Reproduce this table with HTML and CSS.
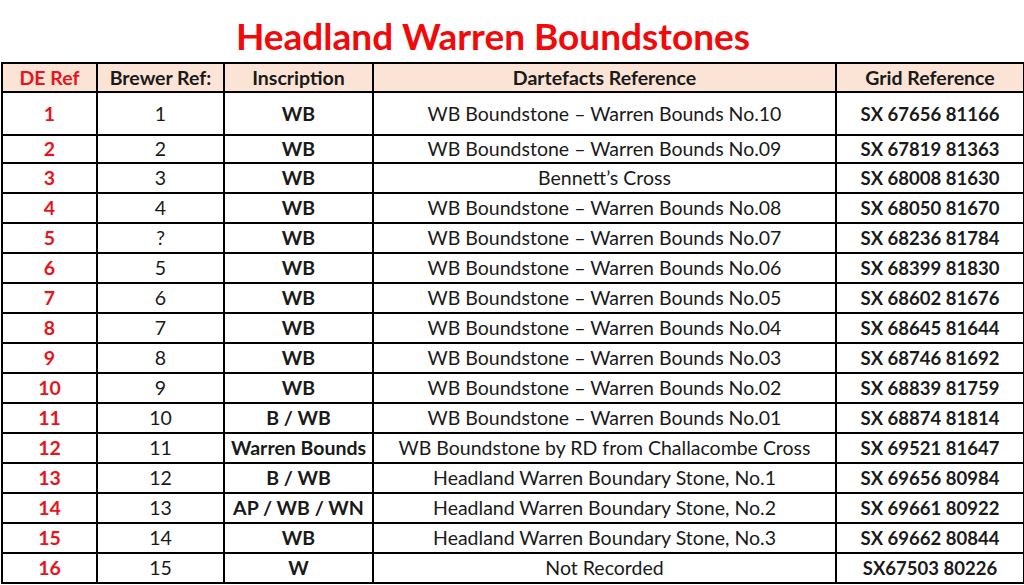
FILE: index.html
```html
<!DOCTYPE html>
<html>
<head>
<meta charset="utf-8">
<link rel="stylesheet" href="styles.css">
</head>
<body>
<h1 class="title">Headland Warren Boundstones</h1>
<table class="grid">
<colgroup>
<col class="c1"><col class="c2"><col class="c3"><col class="c4"><col class="c5">
</colgroup>
<thead>
<tr class="head">
<th class="de">DE Ref</th><th>Brewer Ref:</th><th>Inscription</th><th>Dartefacts Reference</th><th class="g">Grid Reference</th>
</tr>
</thead>
<tbody>
<tr class="r-tall"><td class="de">1</td><td>1</td><td class="b">WB</td><td>WB Boundstone – Warren Bounds No.10</td><td class="g">SX 67656 81166</td></tr>
<tr class="r-short"><td class="de">2</td><td>2</td><td class="b">WB</td><td>WB Boundstone – Warren Bounds No.09</td><td class="g">SX 67819 81363</td></tr>
<tr><td class="de">3</td><td>3</td><td class="b">WB</td><td>Bennett’s Cross</td><td class="g">SX 68008 81630</td></tr>
<tr><td class="de">4</td><td>4</td><td class="b">WB</td><td>WB Boundstone – Warren Bounds No.08</td><td class="g">SX 68050 81670</td></tr>
<tr><td class="de">5</td><td>?</td><td class="b">WB</td><td>WB Boundstone – Warren Bounds No.07</td><td class="g">SX 68236 81784</td></tr>
<tr><td class="de">6</td><td>5</td><td class="b">WB</td><td>WB Boundstone – Warren Bounds No.06</td><td class="g">SX 68399 81830</td></tr>
<tr><td class="de">7</td><td>6</td><td class="b">WB</td><td>WB Boundstone – Warren Bounds No.05</td><td class="g">SX 68602 81676</td></tr>
<tr><td class="de">8</td><td>7</td><td class="b">WB</td><td>WB Boundstone – Warren Bounds No.04</td><td class="g">SX 68645 81644</td></tr>
<tr><td class="de">9</td><td>8</td><td class="b">WB</td><td>WB Boundstone – Warren Bounds No.03</td><td class="g">SX 68746 81692</td></tr>
<tr><td class="de">10</td><td>9</td><td class="b">WB</td><td>WB Boundstone – Warren Bounds No.02</td><td class="g">SX 68839 81759</td></tr>
<tr><td class="de">11</td><td>10</td><td class="b">B / WB</td><td>WB Boundstone – Warren Bounds No.01</td><td class="g">SX 68874 81814</td></tr>
<tr><td class="de">12</td><td>11</td><td class="b">Warren Bounds</td><td>WB Boundstone by RD from Challacombe Cross</td><td class="g">SX 69521 81647</td></tr>
<tr><td class="de">13</td><td>12</td><td class="b">B / WB</td><td>Headland Warren Boundary Stone, No.1</td><td class="g">SX 69656 80984</td></tr>
<tr><td class="de">14</td><td>13</td><td class="b">AP / WB / WN</td><td>Headland Warren Boundary Stone, No.2</td><td class="g">SX 69661 80922</td></tr>
<tr><td class="de">15</td><td>14</td><td class="b">WB</td><td>Headland Warren Boundary Stone, No.3</td><td class="g">SX 69662 80844</td></tr>
<tr><td class="de">16</td><td>15</td><td class="b">W</td><td>Not Recorded</td><td class="g">SX67503 80226</td></tr>
</tbody>
</table>
</body>
</html>
```
FILE: styles.css
```css
html, body {
  margin: 0;
  padding: 0;
  background: #ffffff;
}
body {
  font-family: Lato, "Liberation Sans", sans-serif;
  color: #1a1a1a;
  width: 1024px;
}
.title {
  margin: 0;
  height: 62px;
  line-height: 72px;
  text-align: center;
  font-size: 37px;
  font-weight: 700;
  color: #f00a0a;
  padding-right: 38px;
}
.grid {
  border-collapse: collapse;
  table-layout: fixed;
  width: 1022px;
  margin-left: 1px;
}
.c1 { width: 95px; }
.c2 { width: 127px; }
.c3 { width: 149px; }
.c4 { width: 463px; }
.c5 { width: 188px; }
.grid th, .grid td {
  border: 2px solid #000000;
  padding: 0;
  text-align: center;
  vertical-align: middle;
  font-size: 19.5px;
  line-height: 22px;
  white-space: nowrap;
  overflow: hidden;
}
.grid th {
  background: #fbe3d5;
  font-weight: 700;
  height: 27px;
}
.grid td {
  height: 28px;
  font-weight: 400;
}
.grid tr.r-tall td { height: 41px; }
.grid tr.r-short td { height: 26px; }
.grid .de {
  color: #e8141c;
  font-weight: 700;
}
.grid td.b {
  font-weight: 700;
}
.grid td.g {
  font-weight: 700;
  font-size: 18.5px;
}
```
